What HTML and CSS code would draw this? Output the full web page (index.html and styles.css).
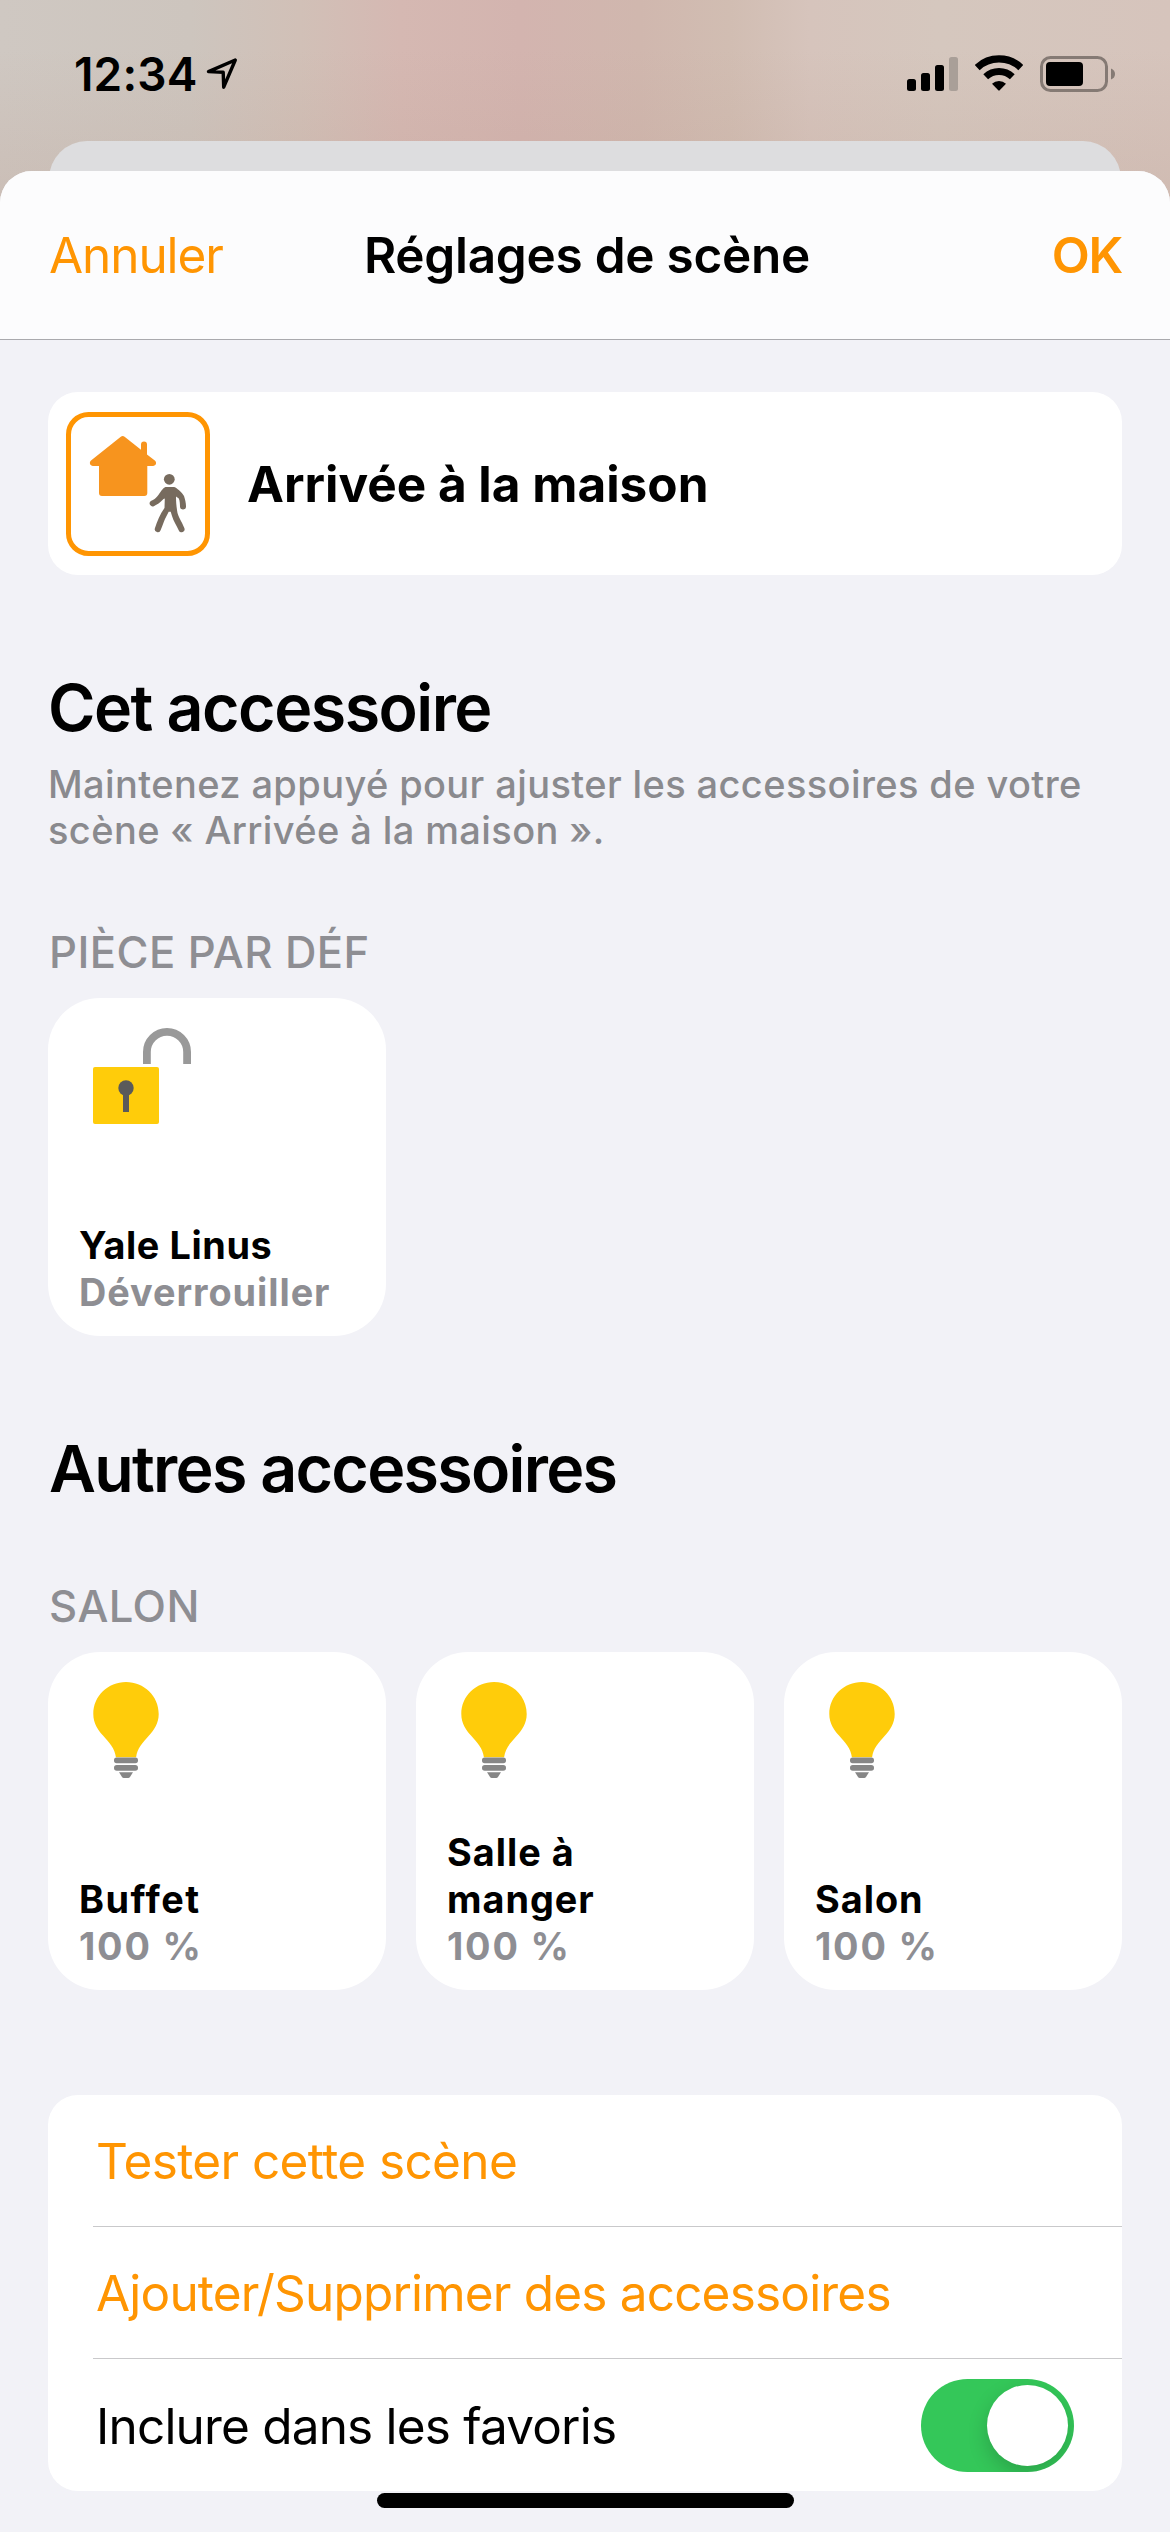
FILE: index.html
```html
<!DOCTYPE html>
<html lang="fr">
<head>
<meta charset="utf-8">
<title>Réglages de scène</title>
<link rel="stylesheet" href="styles.css">
</head>
<body>
<svg class="defs" width="0" height="0" aria-hidden="true">
  <symbol id="bulb" viewBox="45 29 66 98">
    <path fill="#ffcc0a" d="M67.9 105.3C66.7 96 61.5 91 55 83.500C50 78 45.300 71.500 45.300 62C45.300 44 60 30 78 30S110.700 44 110.700 62C110.700 71.500 106 78 101 83.500C94.500 91 89.300 96 88.100 105.300Z"/>
    <g fill="#868686">
      <rect x="66" y="105.600" width="24" height="5.600" rx="2.600"/>
      <rect x="66" y="113" width="24" height="5.800" rx="2.800"/>
      <path d="M71 120.200H85L82 125Q81.300 126 80.300 126H75.700Q74.700 126 74 125Z"/>
    </g>
  </symbol>
</svg>

<div class="screen">
  <div class="status-bar">
    <span class="time">12:34</span>
    <svg class="location" width="33" height="33" viewBox="207 57 33 33">
      <path d="M236.300 60L209.500 71.600L224.200 72.200L224.700 87.200Z" fill="none" stroke="#000" stroke-width="3.400" stroke-linejoin="round"/>
    </svg>
    <div class="indicators">
      <svg width="51" height="38" viewBox="0 0 51 38">
        <rect x="0" y="24" width="9" height="12" rx="2.500"/>
        <rect x="14" y="18" width="9" height="18" rx="2.500"/>
        <rect x="28" y="10" width="9" height="26" rx="2.500"/>
        <rect x="42" y="2" width="9" height="34" rx="2.500" fill="#a99f98"/>
      </svg>
      <svg width="48" height="38" viewBox="0 0 48 38">
        <g fill="none" stroke="#000">
          <path d="M2.200 12.500A32 32 0 0 1 45.800 12.500" stroke-width="7.200"/>
          <path d="M10.700 21.700A19.500 19.500 0 0 1 37.300 21.700" stroke-width="7"/>
        </g>
        <path d="M17 28.700A10.500 10.500 0 0 1 31 28.700L24.700 35.300Q24 36 23.300 35.300Z"/>
      </svg>
      <svg width="75" height="38" viewBox="0 0 75 38">
        <rect x="1.500" y="2.500" width="65" height="33" rx="9" fill="none" stroke="#857a74" stroke-width="3"/>
        <rect x="6" y="7" width="37" height="24" rx="4"/>
        <path d="M71 13.500Q75 15 75 19T71 24.500Z" fill="#857a74"/>
      </svg>
    </div>
  </div>

  <div class="back-sheet"></div>
  <main class="sheet">
    <header class="nav">
      <a class="nav-cancel">Annuler</a>
      <h1 class="nav-title">Réglages de scène</h1>
      <a class="nav-done">OK</a>
    </header>

    <div class="content">
      <section class="scene">
        <svg class="scene-icon" viewBox="0 0 144 144">
          <rect x="2.500" y="2.500" width="139" height="139" rx="20" fill="none" stroke="#ff9502" stroke-width="5"/>
          <path fill="#f7941e" d="M54.800 24.800Q56.700 23.300 58.600 24.800L75 37.700V32.600A3 3 0 0 1 81 32.600V42.500L88.800 48.600C91.200 50.500 90 54 87 54H81.300V81A3 3 0 0 1 78.300 84H36A3 3 0 0 1 33 81V54H27C24 54 22.800 50.500 25 48.600Z"/>
          <g fill="#776b5e">
            <circle cx="103.300" cy="67.300" r="5.400"/>
            <path d="M99.500 75H108C110 75 117 81.500 118 84C119 87 120 91 120 94.300A3 3 0 0 1 114 94.500C113.900 91 113.800 89 112.800 86.500L110 84.500C110 91 110.500 95 111.500 101C113 106 117 112 118.300 116A3 3 0 0 1 112.800 118.400C110.500 113.500 107.500 109 106 104L104.700 99.700H102.700L99 107C97.500 110.500 96 115 94.700 118A3 3 0 0 1 88.900 116.200C91 110 94 102 98.500 96L98.800 86.500L97.500 87C94 91 91 92.500 88.200 94A3 3 0 0 1 84.900 89C91 86.500 92 83 95.500 78.500Q98 75.200 99.500 75Z"/>
          </g>
        </svg>
        <span class="scene-name">Arrivée à la maison</span>
      </section>

      <section class="group">
        <h2 class="heading">Cet accessoire</h2>
        <p class="hint">Maintenez appuyé pour ajuster les accessoires de votre<br>scène « Arrivée à la maison ».</p>
        <h3 class="room">PIÈCE PAR DÉF</h3>
        <div class="tiles">
          <article class="tile">
            <svg class="tile-icon" width="99" height="98" viewBox="45 29 99 98">
              <path d="M98.900 66V54A20.100 20.100 0 0 1 139.100 54V66" fill="none" stroke="#999" stroke-width="7.800"/>
              <rect x="45" y="69" width="66" height="57" rx="2" fill="#ffcc0a"/>
              <circle cx="78" cy="90" r="7.700" fill="#5a5a5a"/>
              <path d="M75 92H81V114H75Z" fill="#5a5a5a"/>
            </svg>
            <div class="tile-name">Yale Linus</div>
            <div class="tile-state">Déverrouiller</div>
          </article>
        </div>
      </section>

      <section class="group">
        <h2 class="heading heading-long">Autres accessoires</h2>
        <h3 class="room">SALON</h3>
        <div class="tiles">
          <article class="tile">
            <svg class="tile-icon" width="66" height="98"><use href="#bulb"/></svg>
            <div class="tile-name wide">Buffet</div>
            <div class="tile-state wide">100 %</div>
          </article>
          <article class="tile">
            <svg class="tile-icon" width="66" height="98"><use href="#bulb"/></svg>
            <div class="tile-name medium">Salle à<br>manger</div>
            <div class="tile-state wide">100 %</div>
          </article>
          <article class="tile">
            <svg class="tile-icon" width="66" height="98"><use href="#bulb"/></svg>
            <div class="tile-name medium">Salon</div>
            <div class="tile-state wide">100 %</div>
          </article>
        </div>
      </section>

      <section class="list">
        <div class="row action">Tester cette scène</div>
        <div class="row action tight">Ajouter/Supprimer des accessoires</div>
        <div class="row tight">Inclure dans les favoris<span class="switch"><span class="knob"></span></span></div>
      </section>
    </div>
    <div class="home-indicator"></div>
  </main>
</div>
</body>
</html>
```
FILE: styles.css
```css
* { box-sizing: border-box; }

body {
  margin: 0;
  font-family: Inter, "Liberation Sans", sans-serif;
  color: #000;
}

h1, h2, h3, p { margin: 0; }
svg { display: block; flex: none; }
.defs { position: absolute; }

.screen {
  width: 1170px;
  height: 2532px;
  overflow: hidden;
  display: flex;
  flex-direction: column;
  background:
    linear-gradient(180deg, rgba(190, 160, 148, 0) 50px, rgba(190, 160, 148, .25) 200px),
    linear-gradient(90deg, #cfc8c2 0, #cdc5be 190px, #d1c0b7 300px, #d5b8b2 400px, #d3b4af 520px, #d0b7ae 640px, #d1bdb2 730px, #d6c4bc 810px, #d5c7be 940px, #d6c4bc 1170px);
}

.status-bar {
  flex: none;
  height: 141px;
  padding: 8px 55px 0 74px;
  display: flex;
  align-items: flex-start;
}

.time {
  font-size: 46px;
  font-weight: 600;
  line-height: 132px;
  letter-spacing: .16px;
}

.location { margin: 49px 0 0 9px; }

.indicators {
  margin: 47px 0 0 auto;
  display: flex;
  gap: 17px;
}

.back-sheet {
  flex: none;
  height: 60px;
  margin: 0 49px -30px;
  border-radius: 38px 38px 0 0;
  background: #dddddf;
}

.sheet {
  flex: 1;
  position: relative;
  border-radius: 32px 32px 0 0;
  overflow: hidden;
  background: #f2f2f7;
}

.nav {
  height: 169px;
  padding: 0 48px 0 49px;
  display: grid;
  grid-template-columns: 1fr auto 1fr;
  align-items: center;
  background: #fcfcfd;
  border-bottom: 1px solid #a9a9ad;
  font-size: 49.5px;
  line-height: 168px;
}

.nav-cancel { color: #ff9502; letter-spacing: -1.08px; }
.nav-title { padding-left: 3px; font-size: inherit; font-weight: 600; letter-spacing: -.26px; }
.nav-done { color: #ff9502; font-weight: 600; letter-spacing: -1.3px; text-align: right; }

.content { padding: 52px 48px 0; }

.scene {
  height: 183px;
  padding-left: 18px;
  display: flex;
  align-items: center;
  gap: 37px;
  background: #fff;
  border-radius: 30px;
}

.scene-icon { width: 144px; height: 144px; }
.scene-name { font-size: 49.5px; font-weight: 700; }

.group { margin-top: 94px; }

.heading {
  font-size: 64.5px;
  font-weight: 600;
  line-height: 78px;
  letter-spacing: -1.53px;
}

.heading-long { letter-spacing: -1.72px; padding-left: 1px; }

.hint {
  margin-top: 14px;
  font-size: 38px;
  font-weight: 500;
  line-height: 46px;
  letter-spacing: .39px;
  color: #8a8a8e;
  white-space: nowrap;
}

.room {
  margin: 73px 0 18px 1px;
  font-size: 43.6px;
  font-weight: 550;
  line-height: 54px;
  letter-spacing: .45px;
  color: #8e8e93;
}

.heading + .room { margin-top: 72px; }

.tiles {
  display: grid;
  grid-template-columns: repeat(3, 338px);
  gap: 30px;
}

.tile {
  height: 338px;
  padding: 29px 20px 20px 31px;
  display: flex;
  flex-direction: column;
  background: #fff;
  border-radius: 52px;
  font-size: 37.8px;
  line-height: 47px;
}

.tile-icon { margin: 0 0 auto 14px; }
.tile-name { font-weight: 700; letter-spacing: .6px; }
.tile-name.medium { letter-spacing: 1px; }
.tile-name.wide { letter-spacing: 1.5px; }
.tile-state { font-weight: 700; letter-spacing: .95px; color: #8e8e93; }
.tile-state.wide { letter-spacing: 1.8px; }

.list {
  margin-top: 105px;
  padding-left: 45px;
  background: #fff;
  border-radius: 30px;
}

.row {
  height: 132px;
  padding: 1px 48px 0 3px;
  display: flex;
  align-items: center;
  justify-content: space-between;
  border-bottom: 1px solid #c9c9cb;
  font-size: 49.5px;
  letter-spacing: -.61px;
}

.row:last-child { border-bottom: 0; }
.row.action { color: #ff9502; }
.row.tight { letter-spacing: -.81px; }

.switch {
  width: 153px;
  height: 93px;
  padding: 6px;
  display: flex;
  justify-content: flex-end;
  border-radius: 47px;
  background: #34c759;
  overflow: hidden;
}

.knob {
  width: 81px;
  height: 81px;
  border-radius: 50%;
  background: #fff;
  box-shadow: 0 8px 20px rgba(0, 0, 0, .18);
}

.home-indicator {
  width: 417px;
  height: 15px;
  margin: 2px auto 0;
  border-radius: 8px;
  background: #000;
}
```
